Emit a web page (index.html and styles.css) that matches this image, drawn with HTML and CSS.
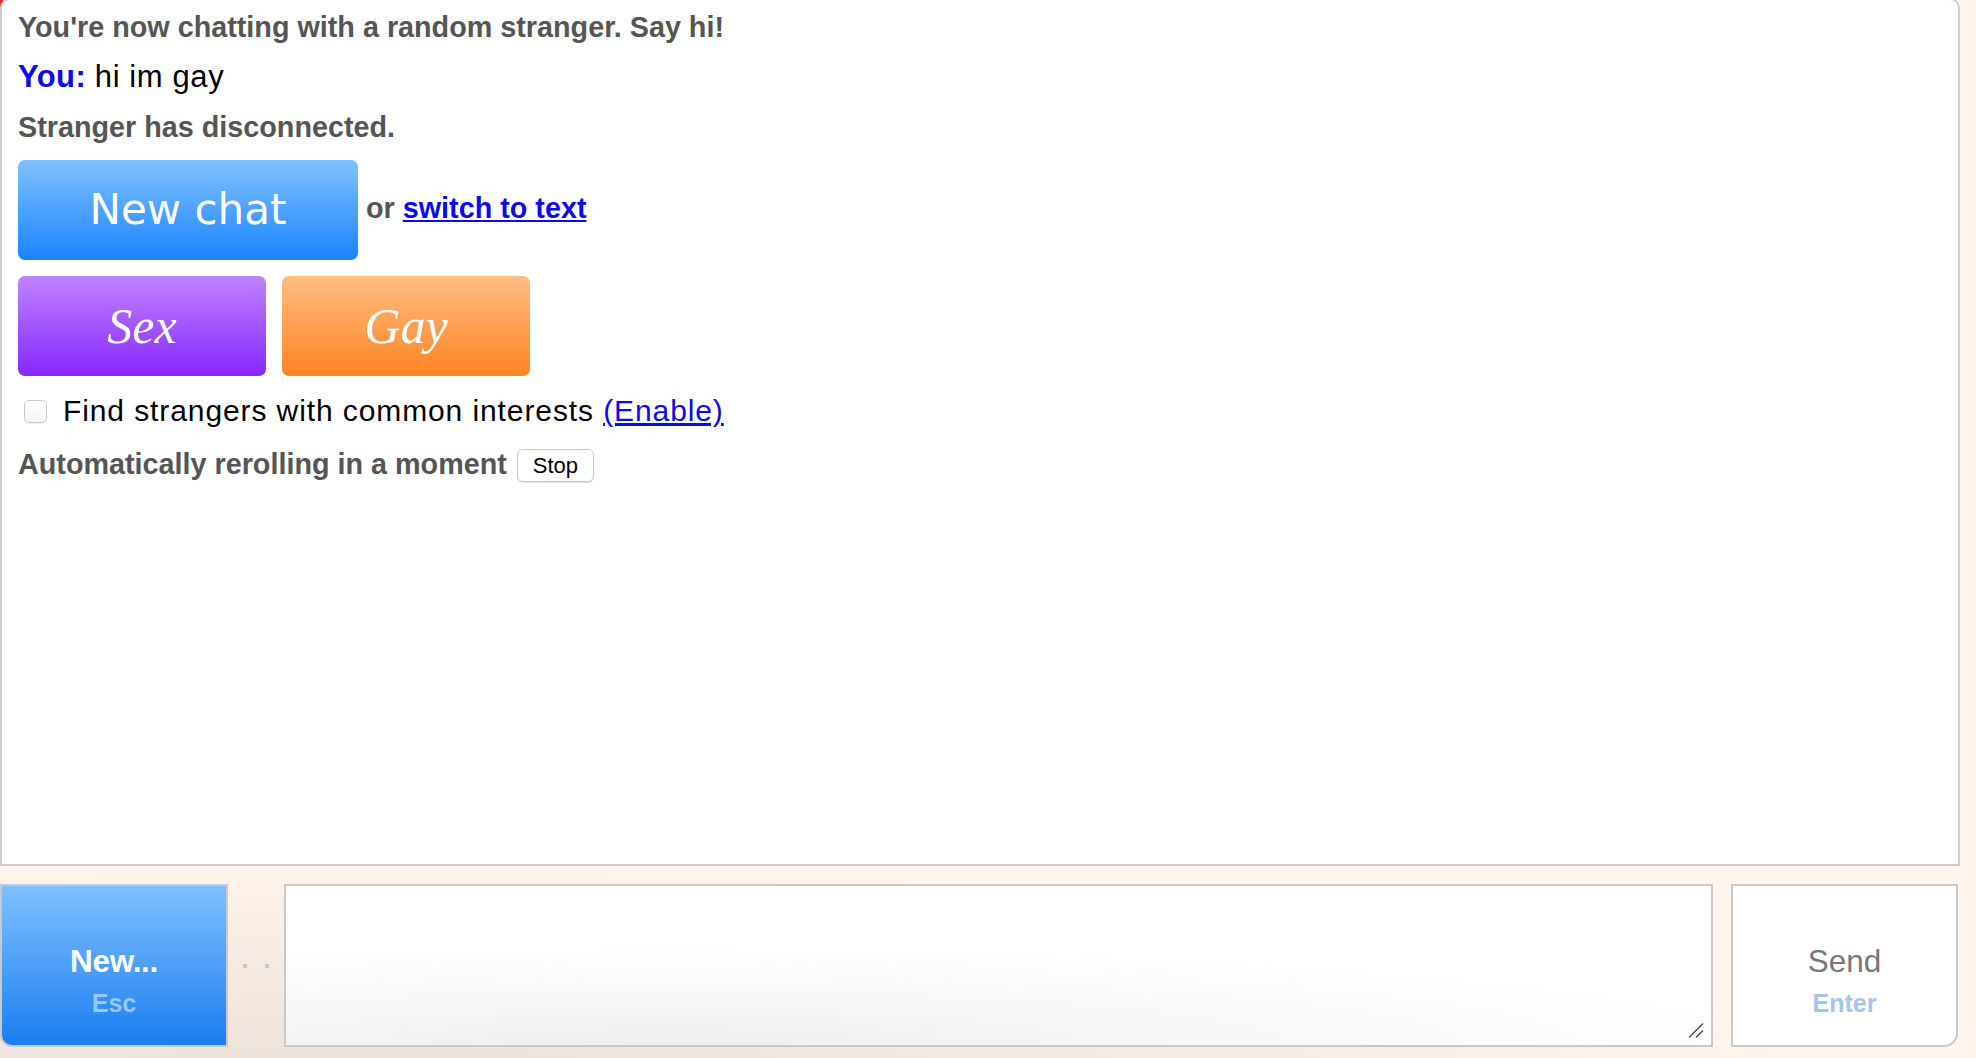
FILE: index.html
```html
<!DOCTYPE html>
<html>
<head>
<meta charset="utf-8">
<title>Chat</title>
<link rel="stylesheet" href="styles.css">
</head>
<body>
<div class="app">
  <div class="log">
    <p class="status">You're now chatting with a random stranger. Say hi!</p>
    <p class="msg"><strong class="you">You:</strong> <span class="msgtext">hi im gay</span></p>
    <p class="status">Stranger has disconnected.</p>
    <div class="again">
      <button class="newchat">New chat</button>
      <span class="or">or <a href="#">switch to text</a></span>
    </div>
    <div class="topics">
      <button class="topic sex">Sex</button>
      <button class="topic gay">Gay</button>
    </div>
    <div class="interests">
      <span class="check"></span>
      <span class="intext">Find strangers with common interests <a href="#">(Enable)</a></span>
    </div>
    <div class="reroll">
      <span class="status inline">Automatically rerolling in a moment</span>
      <button class="stop">Stop</button>
    </div>
  </div>
  <div class="controls">
    <button class="newbtn"><span class="big">New...</span><span class="key">Esc</span></button>
    <div class="dots"><i></i><i></i></div>
    <div class="inputwrap">
      <textarea class="input"></textarea>
      <svg class="grip" width="16" height="16" viewBox="0 0 16 16"><path d="M1 15.5 L15 1.5 M8 15.5 L15 8.5" stroke="#4a4a4a" stroke-width="1.4" fill="none"/></svg>
    </div>
    <button class="sendbtn"><span class="big">Send</span><span class="key">Enter</span></button>
  </div>
</div>
</body>
</html>
```
FILE: styles.css
```css
* { box-sizing: border-box; }
html, body { margin: 0; padding: 0; }
body {
  width: 1976px;
  height: 1058px;
  overflow: hidden;
  font-family: "Liberation Sans", Arial, sans-serif;
  background:
    linear-gradient(#e8262a, #e8262a) 0 0 / 6px 8px no-repeat,
    radial-gradient(ellipse 1500px 230px at 350px 1085px, #ebe1d8 0%, #f4eae1 50%, #fff5ec 100%) no-repeat,
    #fff5ec;
}
.app {
  display: flex;
  flex-direction: column;
  height: 1058px;
}
.log {
  flex: none;
  height: 868px;
  margin: -2px 16px 0 0;
  border: 2px solid #cdcdcd;
  border-radius: 10px 10px 0 0;
  background: #fff;
  padding: 10px 16px;
}
.status {
  margin: 0 0 16px;
  font-size: 28.75px;
  line-height: 34px;
  font-weight: bold;
  color: #555;
}
.status.inline { margin: 0; }
.msg {
  margin: 0 0 16px;
  font-size: 31px;
  line-height: 34px;
  color: #000;
}
.you { color: #0b0bf0; font-weight: bold; letter-spacing: 0.4px; }
.msgtext { font-size: 31px; letter-spacing: 0.6px; }

.again {
  display: flex;
  align-items: center;
  gap: 8px;
  margin-bottom: 16px;
}
button {
  border: none;
  padding: 0;
  margin: 0;
  cursor: pointer;
}
.newchat {
  width: 340px;
  height: 100px;
  border-radius: 7px;
  background: linear-gradient(#80c0ff, #1a84fd);
  color: #fff;
  font-family: "DejaVu Sans", sans-serif;
  font-size: 42px;
  display: flex;
  align-items: center;
  justify-content: center;
  padding-bottom: 2px;
}
.or {
  font-size: 28.75px;
  font-weight: bold;
  color: #555;
  margin-top: -3px;
}
.or a { color: #0a0af0; text-decoration: underline; }

.topics {
  display: flex;
  gap: 16px;
  margin-bottom: 18px;
}
.topic {
  width: 248px;
  height: 100px;
  border-radius: 7px;
  color: #fff;
  font-family: "Liberation Serif", serif;
  font-style: italic;
  font-size: 50px;
  display: flex;
  align-items: center;
  justify-content: center;
}
.sex { background: linear-gradient(#c083ff, #8627fd); }
.gay { background: linear-gradient(#ffbd83, #ff8322); }

.interests {
  display: flex;
  align-items: center;
  gap: 16px;
  margin: 0 0 17px 6px;
  line-height: 34px;
}
.check {
  width: 23px;
  height: 23px;
  border: 1px solid #c9c9c9;
  border-radius: 5px;
  background: linear-gradient(#fff, #f5f5f5);
  box-shadow: 0 1px 1px rgba(0,0,0,0.06);
}
.intext {
  font-size: 30px;
  letter-spacing: 0.9px;
  color: #000;
}
.intext a { color: #0a0af0; text-decoration: underline; }

.reroll {
  display: flex;
  align-items: center;
  gap: 10px;
}
.stop {
  width: 77px;
  height: 33px;
  margin-top: 4px;
  border: 1px solid #c8c8c8;
  border-radius: 6px;
  background: #fff;
  box-shadow: 0 1px 1px rgba(0,0,0,0.12);
  font-family: "Liberation Sans", Arial, sans-serif;
  font-size: 22px;
  color: #000;
}

.controls {
  flex: none;
  display: flex;
  height: 163px;
  margin: 18px 18px 0 0;
}
.newbtn, .sendbtn {
  display: flex;
  flex-direction: column;
  align-items: center;
  padding-top: 57px;
  font-family: "Liberation Sans", Arial, sans-serif;
}
.newbtn {
  width: 228px;
  border: 2px solid #c9c9c9;
  border-radius: 0 0 0 12px;
  background: linear-gradient(#80c0ff, #1a7ef0);
}
.big {
  font-size: 31.5px;
  line-height: 36px;
}
.key {
  margin-top: 9px;
  font-size: 25px;
  line-height: 30px;
  font-weight: bold;
}
.newbtn .big { color: #fff; font-weight: bold; letter-spacing: -0.3px; }
.newbtn .key { color: #98c6f6; }
.dots {
  width: 56px;
  display: flex;
  align-items: center;
  justify-content: center;
  gap: 18px;
}
.dots i {
  display: block;
  width: 4px;
  height: 4px;
  background: #c8c8c8;
}
.inputwrap {
  flex: 1;
  position: relative;
  margin-right: 18px;
}
.input {
  display: block;
  width: 100%;
  height: 163px;
  margin: 0;
  resize: none;
  border: 2px solid #c9c9c9;
  border-radius: 0;
  outline: none;
  background:
    radial-gradient(ellipse 1150px 100px at 380px 100%, #eeeeee 0%, #f7f7f7 45%, #fff 100%);
  font-family: "Liberation Sans", Arial, sans-serif;
  font-size: 28px;
}
.grip {
  position: absolute;
  right: 9px;
  bottom: 9px;
}
.sendbtn {
  width: 227px;
  border: 2px solid #c9c9c9;
  border-radius: 0 0 14px 0;
  background: #fff;
}
.sendbtn .big { color: #777; }
.sendbtn .key { color: #a4c4ea; }
```
